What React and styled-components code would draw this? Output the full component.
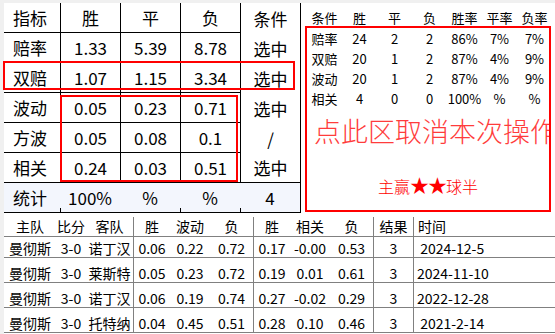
import React from "react";
import styled, { createGlobalStyle } from "styled-components";

const GlobalStyle = createGlobalStyle`
  html, body {
    margin: 0;
    padding: 0;
  }
  body {
    width: 555px;
    height: 334px;
    overflow: hidden;
    background: #f0f0f0;
    color: #000;
    font-family: "Noto Sans CJK SC", "Microsoft YaHei", sans-serif;
  }
  * {
    box-sizing: border-box;
  }
`;

const odds = [
    ["指标", "胜", "平", "负", "条件"],
    ["赔率", "1.33", "5.39", "8.78", "选中"],
    ["双赔", "1.07", "1.15", "3.34", "选中"],
    ["波动", "0.05", "0.23", "0.71", "选中"],
    ["方波", "0.05", "0.08", "0.1", "/"],
    ["相关", "0.24", "0.03", "0.51", "选中"]
];
const totals = ["统计", "100%", "%", "%", "4"];

const tallyHead = ["条件", "胜", "平", "负", "胜率", "平率", "负率"];
const tally = [
    ["赔率", "24", "2", "2", "86%", "7%", "7%"],
    ["双赔", "20", "1", "2", "87%", "4%", "9%"],
    ["波动", "20", "1", "2", "87%", "4%", "9%"],
    ["相关", "4", "0", "0", "100%", "%", "%"]
];

const matchHead = ["主队", "比分", "客队", "胜", "波动", "负", "胜", "相关", "负", "结果", "时间"];
const matches = [
    ["曼彻斯", "3-0", "诺丁汉", "0.06", "0.22", "0.72", "0.17", "-0.00", "0.53", "3", " 2024-12-5"],
    ["曼彻斯", "3-0", "莱斯特", "0.05", "0.23", "0.72", "0.19", "0.01", "0.61", "3", "2024-11-10"],
    ["曼彻斯", "3-0", "诺丁汉", "0.06", "0.19", "0.74", "0.27", "-0.02", "0.29", "3", "2022-12-28"],
    ["曼彻斯", "3-0", "托特纳", "0.04", "0.45", "0.51", "0.28", "0.10", "0.46", "3", " 2021-2-14"]
];
// columns of the match list that start a new group (drawn with a line on the left)
const groupStarts = [3, 6, 9, 10];

export default function App() {
    return (
        <>
            <GlobalStyle />
            <Page>
                <Top>
                    <LeftPanel>
                        <Sheet>
                            {odds.map((row, r) =>
                                row.map((v, c) => (
                                    <Cell
                                        key={r + "-" + c}
                                        $label={c === 0}
                                        $line={c < 4 || r === odds.length - 1}
                                    >
                                        {v}
                                    </Cell>
                                ))
                            )}
                            {totals.map((v, c) => (
                                <StatCell key={"t" + c} $label={c === 0} $tick={c === 1 || c === 3 || c === 4}>
                                    {v}
                                </StatCell>
                            ))}
                        </Sheet>
                        <Mark $left={-1} $top={58} $w={292} $h={29} />
                        <Mark $left={56} $top={92} $w={178} $h={87} />
                    </LeftPanel>

                    <RightPanel>
                        <TallyHead>
                            {tallyHead.map((v, i) => (
                                <span key={i}>{v}</span>
                            ))}
                        </TallyHead>
                        <CancelBox>
                            <TallyGrid>
                                {tally.map((row, r) =>
                                    row.map((v, c) => <span key={r + "-" + c}>{v}</span>)
                                )}
                            </TallyGrid>
                            <CancelText>点此区取消本次操作</CancelText>
                            <Verdict>
                                主赢<Stars>★★</Stars>球半
                            </Verdict>
                        </CancelBox>
                    </RightPanel>
                </Top>

                <Board>
                    {matchHead.map((v, c) => (
                        <HeadCell key={"h" + c} $group={groupStarts.includes(c)} $left={c === 10}>
                            {v}
                        </HeadCell>
                    ))}
                    {matches.map((row, r) =>
                        row.map((v, c) => (
                            <BoardCell key={r + "-" + c} $group={groupStarts.includes(c)} $left={c === 10}>
                                {v}
                            </BoardCell>
                        ))
                    )}
                </Board>
            </Page>
        </>
    );
}

const Page = styled.div`
    padding: 3px 0 0 4px;
    display: flex;
    flex-direction: column;
`;

const Top = styled.div`
    display: flex;
    height: 210px;
`;

const LeftPanel = styled.div`
    position: relative;
    width: 297px;
    background: #fff;
    border-right: 1px solid #000;
`;

const Sheet = styled.div`
    display: grid;
    grid-template-columns: 56px repeat(4, 60px);
    grid-auto-rows: 30px;
    font-size: 17px;
`;

const Cell = styled.div`
    display: flex;
    align-items: center;
    justify-content: ${p => (p.$label ? "flex-start" : "center")};
    padding-left: ${p => (p.$label ? "9px" : "0")};
    border-left: ${p => (p.$label ? "none" : "1px solid #000")};
    border-bottom: ${p => (p.$line ? "1px solid #000" : "none")};
`;

const StatCell = styled.div`
    position: relative;
    display: flex;
    align-items: center;
    justify-content: ${p => (p.$label ? "flex-start" : "center")};
    padding-left: ${p => (p.$label ? "9px" : "0")};
    background: #f3f6fd;
    border-bottom: 1px solid #000;

    &::after {
        content: "";
        display: ${p => (p.$tick ? "block" : "none")};
        position: absolute;
        left: 0;
        bottom: 0;
        width: 1px;
        height: 4px;
        background: #000;
    }
`;

const Mark = styled.div`
    position: absolute;
    left: ${p => p.$left}px;
    top: ${p => p.$top}px;
    width: ${p => p.$w}px;
    height: ${p => p.$h}px;
    border: 2px solid #f00;
    pointer-events: none;
`;

const RightPanel = styled.div`
    flex: 1;
    background: #fff;
    padding: 2px 0 0 4px;
    display: flex;
    flex-direction: column;
`;

const TallyHead = styled.div`
    display: grid;
    grid-template-columns: repeat(7, 35px);
    height: 21px;
    margin-left: 2px;
    align-items: end;
    font-size: 13px;
    line-height: 17px;
    text-align: center;
`;

const CancelBox = styled.div`
    width: 246px;
    height: 186px;
    border: 2px solid #f00;
    overflow: hidden;
`;

const TallyGrid = styled.div`
    display: grid;
    grid-template-columns: repeat(7, 35px);
    grid-auto-rows: 20px;
    align-items: center;
    font-size: 13px;
    line-height: 17px;
    text-align: center;
`;

const CancelText = styled.div`
    margin-top: 8px;
    padding-left: 7px;
    font-size: 27px;
    font-weight: 300;
    line-height: 30px;
    color: #ff3c3c;
    white-space: nowrap;
`;

const Verdict = styled.div`
    margin-top: 29px;
    font-size: 16px;
    font-weight: 300;
    line-height: 20px;
    color: #f00;
    text-align: center;
`;

const Stars = styled.span`
    font-size: 19px;
    line-height: 1;
    letter-spacing: -1px;
`;

const Board = styled.div`
    width: 551px;
    height: 121px;
    padding-top: 4px;
    background: #fff;
    display: grid;
    grid-template-columns: 52px 30px 47px 37px 40px 43px 37px 40px 43px 40px 1fr;
    grid-template-rows: 20px 21px 25px 25px 25px;
    font-size: 14px;
    line-height: 17px;
`;

const HeadCell = styled.div`
    display: flex;
    align-items: flex-end;
    justify-content: ${p => (p.$left ? "flex-start" : "center")};
    padding-left: ${p => (p.$left ? "4px" : "0")};
    padding-bottom: 1px;
    border-left: ${p => (p.$group ? "1px solid #808080" : "none")};
    border-bottom: 1px solid #808080;
`;

const BoardCell = styled.div`
    display: flex;
    align-items: flex-end;
    justify-content: ${p => (p.$left ? "flex-start" : "center")};
    padding-left: ${p => (p.$left ? "3px" : "0")};
    white-space: pre;
    border-left: ${p => (p.$group ? "1px solid #808080" : "none")};
    border-bottom: 1px solid #808080;
`;
